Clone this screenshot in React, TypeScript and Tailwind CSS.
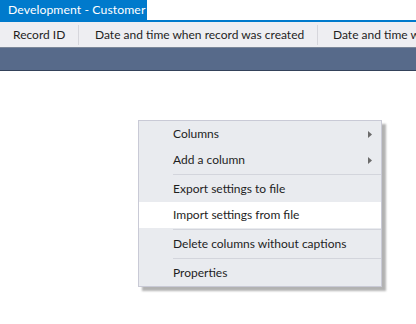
import React from "react";

type Item = { label: string; sub?: boolean; hot?: boolean };

const groups: Item[][] = [
  [{ label: "Columns", sub: true }, { label: "Add a column", sub: true }],
  [{ label: "Export settings to file" }, { label: "Import settings from file", hot: true }],
  [{ label: "Delete columns without captions" }],
  [{ label: "Properties" }],
];

function SubArrow() {
  return (
    <svg width="4" height="7" viewBox="0 0 4 7" className="mr-[9px]">
      <path d="M0 0 L4 3.5 L0 7 Z" fill="#6b6b6b" />
    </svg>
  );
}

function MenuRow({ item }: { item: Item }) {
  return (
    <div
      className={`flex h-[26px] items-center justify-between pl-[34px] ${
        item.hot ? "bg-white" : ""
      }`}
    >
      <span>{item.label}</span>
      {item.sub && <SubArrow />}
    </div>
  );
}

function ContextMenu() {
  return (
    <div className="absolute left-[138px] top-[120px] w-[244px] border border-[#c9cad6] bg-[#e9ebef] text-[12px] text-[#1e1e1e] shadow-[4px_4px_2px_rgba(0,0,0,0.3)]">
      {groups.map((g, gi) => (
        <div key={gi}>
          {gi > 0 && (
            <div className="flex h-[3px] items-center pl-[34px]">
              <div className="h-px w-full bg-[#d3d5dc]" />
            </div>
          )}
          {g.map((it) => (
            <MenuRow key={it.label} item={it} />
          ))}
        </div>
      ))}
    </div>
  );
}

export default function App() {
  return (
    <div
      className="relative h-[324px] w-[416px] overflow-hidden bg-white"
      style={{ fontFamily: "Lato, 'Noto Sans', sans-serif" }}
    >
      {/* document tab strip */}
      <div className="flex h-[20px] items-end">
        <div className="flex h-[20px] w-[147px] shrink-0 items-center whitespace-nowrap bg-[#007acc] pl-[8px] pt-px text-[12.2px] tracking-[0.1px] text-white">
          Development - Customer
        </div>
      </div>
      <div className="h-[2px] bg-[#007acc]" />

      {/* column headers */}
      <div className="flex h-[25px] items-center whitespace-nowrap bg-[#eeeef2] text-[12px] text-[#1e1e1e]">
        <div className="w-[78px] shrink-0 pl-[13px]">Record ID</div>
        <div className="h-[20px] w-px shrink-0 bg-[#d6d6dc]" />
        <div className="w-[238px] shrink-0 pl-[16px]">Date and time when record was created</div>
        <div className="h-[20px] w-px shrink-0 bg-[#d6d6dc]" />
        <div className="shrink-0 pl-[15px]">Date and time when record was modified</div>
      </div>

      {/* group panel band */}
      <div className="h-px bg-[#7b8799]" />
      <div className="h-[22px] bg-[#576a8a]" />
      <div className="h-px bg-[#34425a]" />

      <ContextMenu />
    </div>
  );
}
